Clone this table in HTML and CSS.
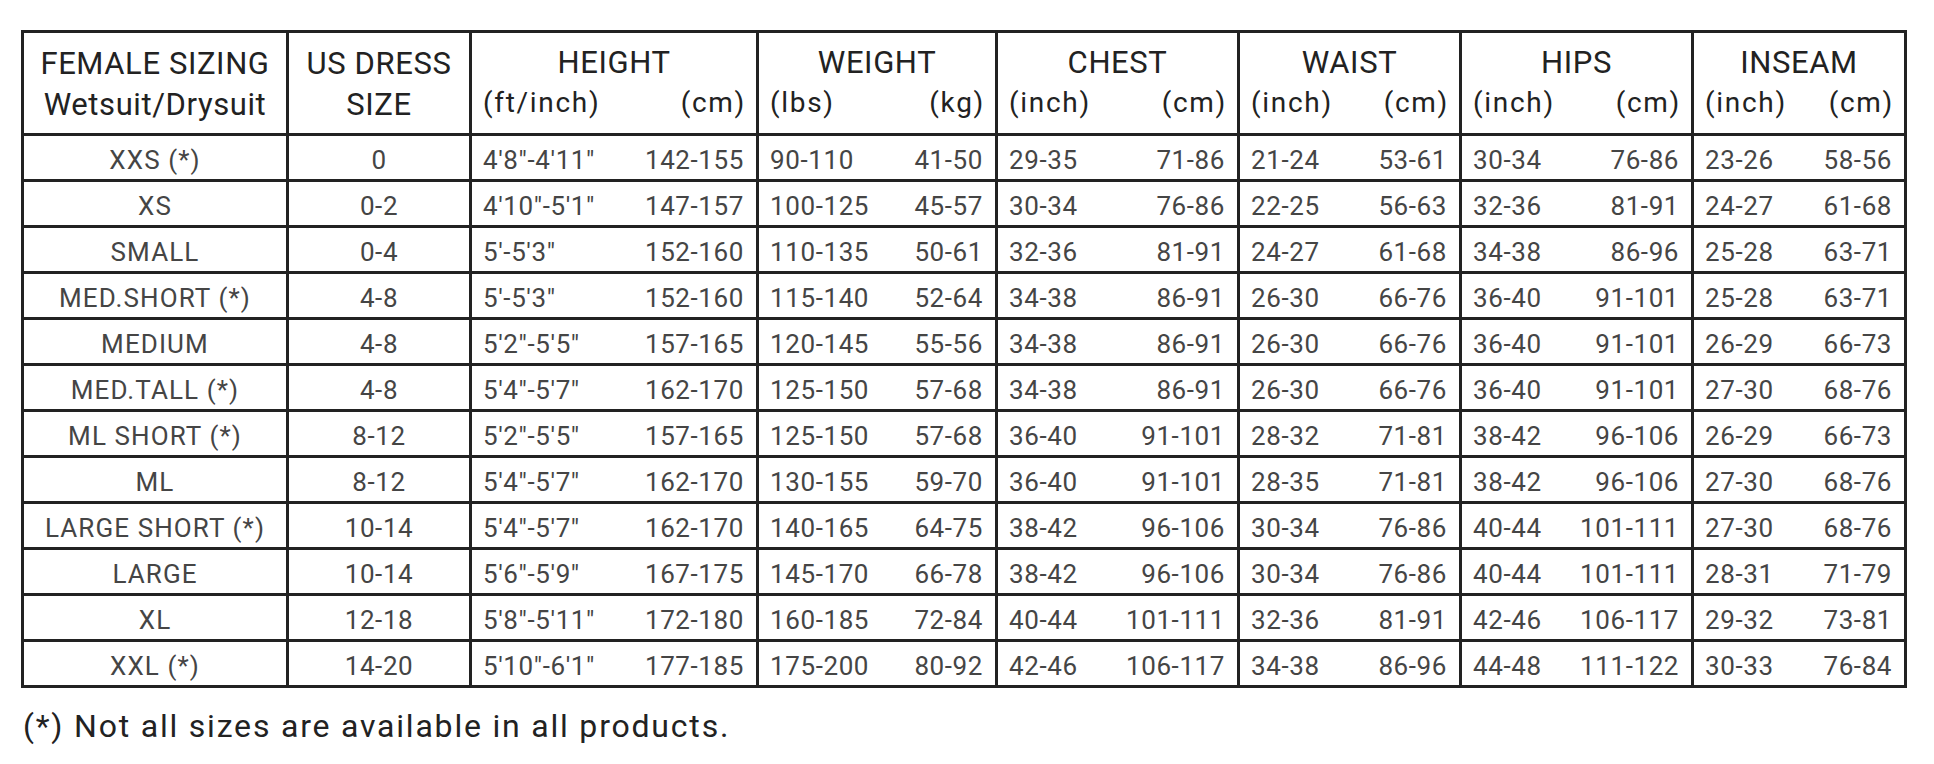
FILE: index.html
```html
<!DOCTYPE html>
<html>
<head>
<meta charset="utf-8">
<link rel="stylesheet" href="styles.css">
</head>
<body>
<div class="wrap">
<table class="chart">
<colgroup>
<col class="w1"><col class="w2">
<col class="wh"><col class="wh2">
<col class="ww"><col class="ww2">
<col class="wc"><col class="wc2">
<col class="wa"><col class="wa2">
<col class="wp"><col class="wp2">
<col class="wi"><col class="wi2">
</colgroup>
<thead>
<tr class="h1">
<th rowspan="2" class="c e">FEMALE SIZING<br>Wetsuit/Drysuit</th>
<th rowspan="2" class="c e">US DRESS<br>SIZE</th>
<th colspan="2" class="g e">HEIGHT</th>
<th colspan="2" class="g e">WEIGHT</th>
<th colspan="2" class="g e">CHEST</th>
<th colspan="2" class="g e">WAIST</th>
<th colspan="2" class="g e">HIPS</th>
<th colspan="2" class="g e">INSEAM</th>
</tr>
<tr class="h2">
<th class="a">(ft/inch)</th><th class="b e">(cm)</th>
<th class="a">(lbs)</th><th class="b e">(kg)</th>
<th class="a">(inch)</th><th class="b e">(cm)</th>
<th class="a">(inch)</th><th class="b e">(cm)</th>
<th class="a">(inch)</th><th class="b e">(cm)</th>
<th class="a">(inch)</th><th class="b e">(cm)</th>
</tr>
</thead>
<tbody>
<tr><td class="c e n">XXS (*)</td><td class="c e">0</td><td class="a">4'8"-4'11"</td><td class="b e">142-155</td><td class="a">90-110</td><td class="b e">41-50</td><td class="a">29-35</td><td class="b e">71-86</td><td class="a">21-24</td><td class="b e">53-61</td><td class="a">30-34</td><td class="b e">76-86</td><td class="a">23-26</td><td class="b e">58-56</td></tr>
<tr><td class="c e n">XS</td><td class="c e">0-2</td><td class="a">4'10"-5'1"</td><td class="b e">147-157</td><td class="a">100-125</td><td class="b e">45-57</td><td class="a">30-34</td><td class="b e">76-86</td><td class="a">22-25</td><td class="b e">56-63</td><td class="a">32-36</td><td class="b e">81-91</td><td class="a">24-27</td><td class="b e">61-68</td></tr>
<tr><td class="c e n">SMALL</td><td class="c e">0-4</td><td class="a">5'-5'3"</td><td class="b e">152-160</td><td class="a">110-135</td><td class="b e">50-61</td><td class="a">32-36</td><td class="b e">81-91</td><td class="a">24-27</td><td class="b e">61-68</td><td class="a">34-38</td><td class="b e">86-96</td><td class="a">25-28</td><td class="b e">63-71</td></tr>
<tr><td class="c e n">MED.SHORT (*)</td><td class="c e">4-8</td><td class="a">5'-5'3"</td><td class="b e">152-160</td><td class="a">115-140</td><td class="b e">52-64</td><td class="a">34-38</td><td class="b e">86-91</td><td class="a">26-30</td><td class="b e">66-76</td><td class="a">36-40</td><td class="b e">91-101</td><td class="a">25-28</td><td class="b e">63-71</td></tr>
<tr><td class="c e n">MEDIUM</td><td class="c e">4-8</td><td class="a">5'2"-5'5"</td><td class="b e">157-165</td><td class="a">120-145</td><td class="b e">55-56</td><td class="a">34-38</td><td class="b e">86-91</td><td class="a">26-30</td><td class="b e">66-76</td><td class="a">36-40</td><td class="b e">91-101</td><td class="a">26-29</td><td class="b e">66-73</td></tr>
<tr><td class="c e n">MED.TALL (*)</td><td class="c e">4-8</td><td class="a">5'4"-5'7"</td><td class="b e">162-170</td><td class="a">125-150</td><td class="b e">57-68</td><td class="a">34-38</td><td class="b e">86-91</td><td class="a">26-30</td><td class="b e">66-76</td><td class="a">36-40</td><td class="b e">91-101</td><td class="a">27-30</td><td class="b e">68-76</td></tr>
<tr><td class="c e n">ML SHORT (*)</td><td class="c e">8-12</td><td class="a">5'2"-5'5"</td><td class="b e">157-165</td><td class="a">125-150</td><td class="b e">57-68</td><td class="a">36-40</td><td class="b e">91-101</td><td class="a">28-32</td><td class="b e">71-81</td><td class="a">38-42</td><td class="b e">96-106</td><td class="a">26-29</td><td class="b e">66-73</td></tr>
<tr><td class="c e n">ML</td><td class="c e">8-12</td><td class="a">5'4"-5'7"</td><td class="b e">162-170</td><td class="a">130-155</td><td class="b e">59-70</td><td class="a">36-40</td><td class="b e">91-101</td><td class="a">28-35</td><td class="b e">71-81</td><td class="a">38-42</td><td class="b e">96-106</td><td class="a">27-30</td><td class="b e">68-76</td></tr>
<tr><td class="c e n">LARGE SHORT (*)</td><td class="c e">10-14</td><td class="a">5'4"-5'7"</td><td class="b e">162-170</td><td class="a">140-165</td><td class="b e">64-75</td><td class="a">38-42</td><td class="b e">96-106</td><td class="a">30-34</td><td class="b e">76-86</td><td class="a">40-44</td><td class="b e">101-111</td><td class="a">27-30</td><td class="b e">68-76</td></tr>
<tr><td class="c e n">LARGE</td><td class="c e">10-14</td><td class="a">5'6"-5'9"</td><td class="b e">167-175</td><td class="a">145-170</td><td class="b e">66-78</td><td class="a">38-42</td><td class="b e">96-106</td><td class="a">30-34</td><td class="b e">76-86</td><td class="a">40-44</td><td class="b e">101-111</td><td class="a">28-31</td><td class="b e">71-79</td></tr>
<tr><td class="c e n">XL</td><td class="c e">12-18</td><td class="a">5'8"-5'11"</td><td class="b e">172-180</td><td class="a">160-185</td><td class="b e">72-84</td><td class="a">40-44</td><td class="b e">101-111</td><td class="a">32-36</td><td class="b e">81-91</td><td class="a">42-46</td><td class="b e">106-117</td><td class="a">29-32</td><td class="b e">73-81</td></tr>
<tr><td class="c e n">XXL (*)</td><td class="c e">14-20</td><td class="a">5'10"-6'1"</td><td class="b e">177-185</td><td class="a">175-200</td><td class="b e">80-92</td><td class="a">42-46</td><td class="b e">106-117</td><td class="a">34-38</td><td class="b e">86-96</td><td class="a">44-48</td><td class="b e">111-122</td><td class="a">30-33</td><td class="b e">76-84</td></tr>
</tbody>
</table>
<p class="note">(*) Not all sizes are available in all products.</p>
</div>
</body>
</html>
```
FILE: styles.css
```css
html, body {
  margin: 0;
  padding: 0;
  background: #ffffff;
}
body {
  font-family: Roboto, "Liberation Sans", sans-serif;
  color: #333333;
}
.wrap {
  padding: 30px 0 0 21px;
}
.chart {
  border-collapse: separate;
  border-spacing: 0;
  table-layout: fixed;
  width: 1886px;
  border-top: 3px solid #222222;
  border-left: 3px solid #222222;
}
.w1 { width: 265px; }
.w2 { width: 183px; }
.wh { width: 143px; } .wh2 { width: 144px; }
.ww { width: 119px; } .ww2 { width: 120px; }
.wc { width: 121px; } .wc2 { width: 121px; }
.wa { width: 111px; } .wa2 { width: 111px; }
.wp { width: 116px; } .wp2 { width: 116px; }
.wi { width: 106px; } .wi2 { width: 107px; }

.chart th, .chart td {
  padding: 0;
  border-bottom: 3px solid #222222;
  white-space: nowrap;
  overflow: hidden;
}
.chart .e {
  border-right: 3px solid #222222;
}
.chart th {
  font-weight: 400;
  color: #222222;
}
.h1 { height: 52px; }
.h2 { height: 51px; }
.h1 th {
  font-size: 31px;
  letter-spacing: 0.6px;
  line-height: 41px;
}
.h1 th.c {
  text-align: center;
  vertical-align: middle;
  padding-top: 2px;
}
.h1 th.g {
  border-bottom: none;
  text-align: center;
  vertical-align: bottom;
  padding-bottom: 2px;
}
.h2 th {
  font-size: 28px;
  letter-spacing: 1.7px;
  vertical-align: top;
  line-height: 36px;
  padding-top: 0;
}
.chart tbody tr { height: 46px; }
.chart td {
  font-size: 26px;
  letter-spacing: 0.6px;
  color: #454545;
  vertical-align: middle;
  padding-top: 5px;
  line-height: 30px;
}
.chart td.n { letter-spacing: 1.1px; }
.chart .c { text-align: center; }
.chart .a { text-align: left; padding-left: 11px; }
.chart .b { text-align: right; padding-right: 12px; }
.chart th.b { padding-right: 10px; }
.note {
  margin: 18px 0 0 2px;
  font-size: 32px;
  line-height: 40px;
  color: #222222;
  letter-spacing: 1.8px;
}
```
